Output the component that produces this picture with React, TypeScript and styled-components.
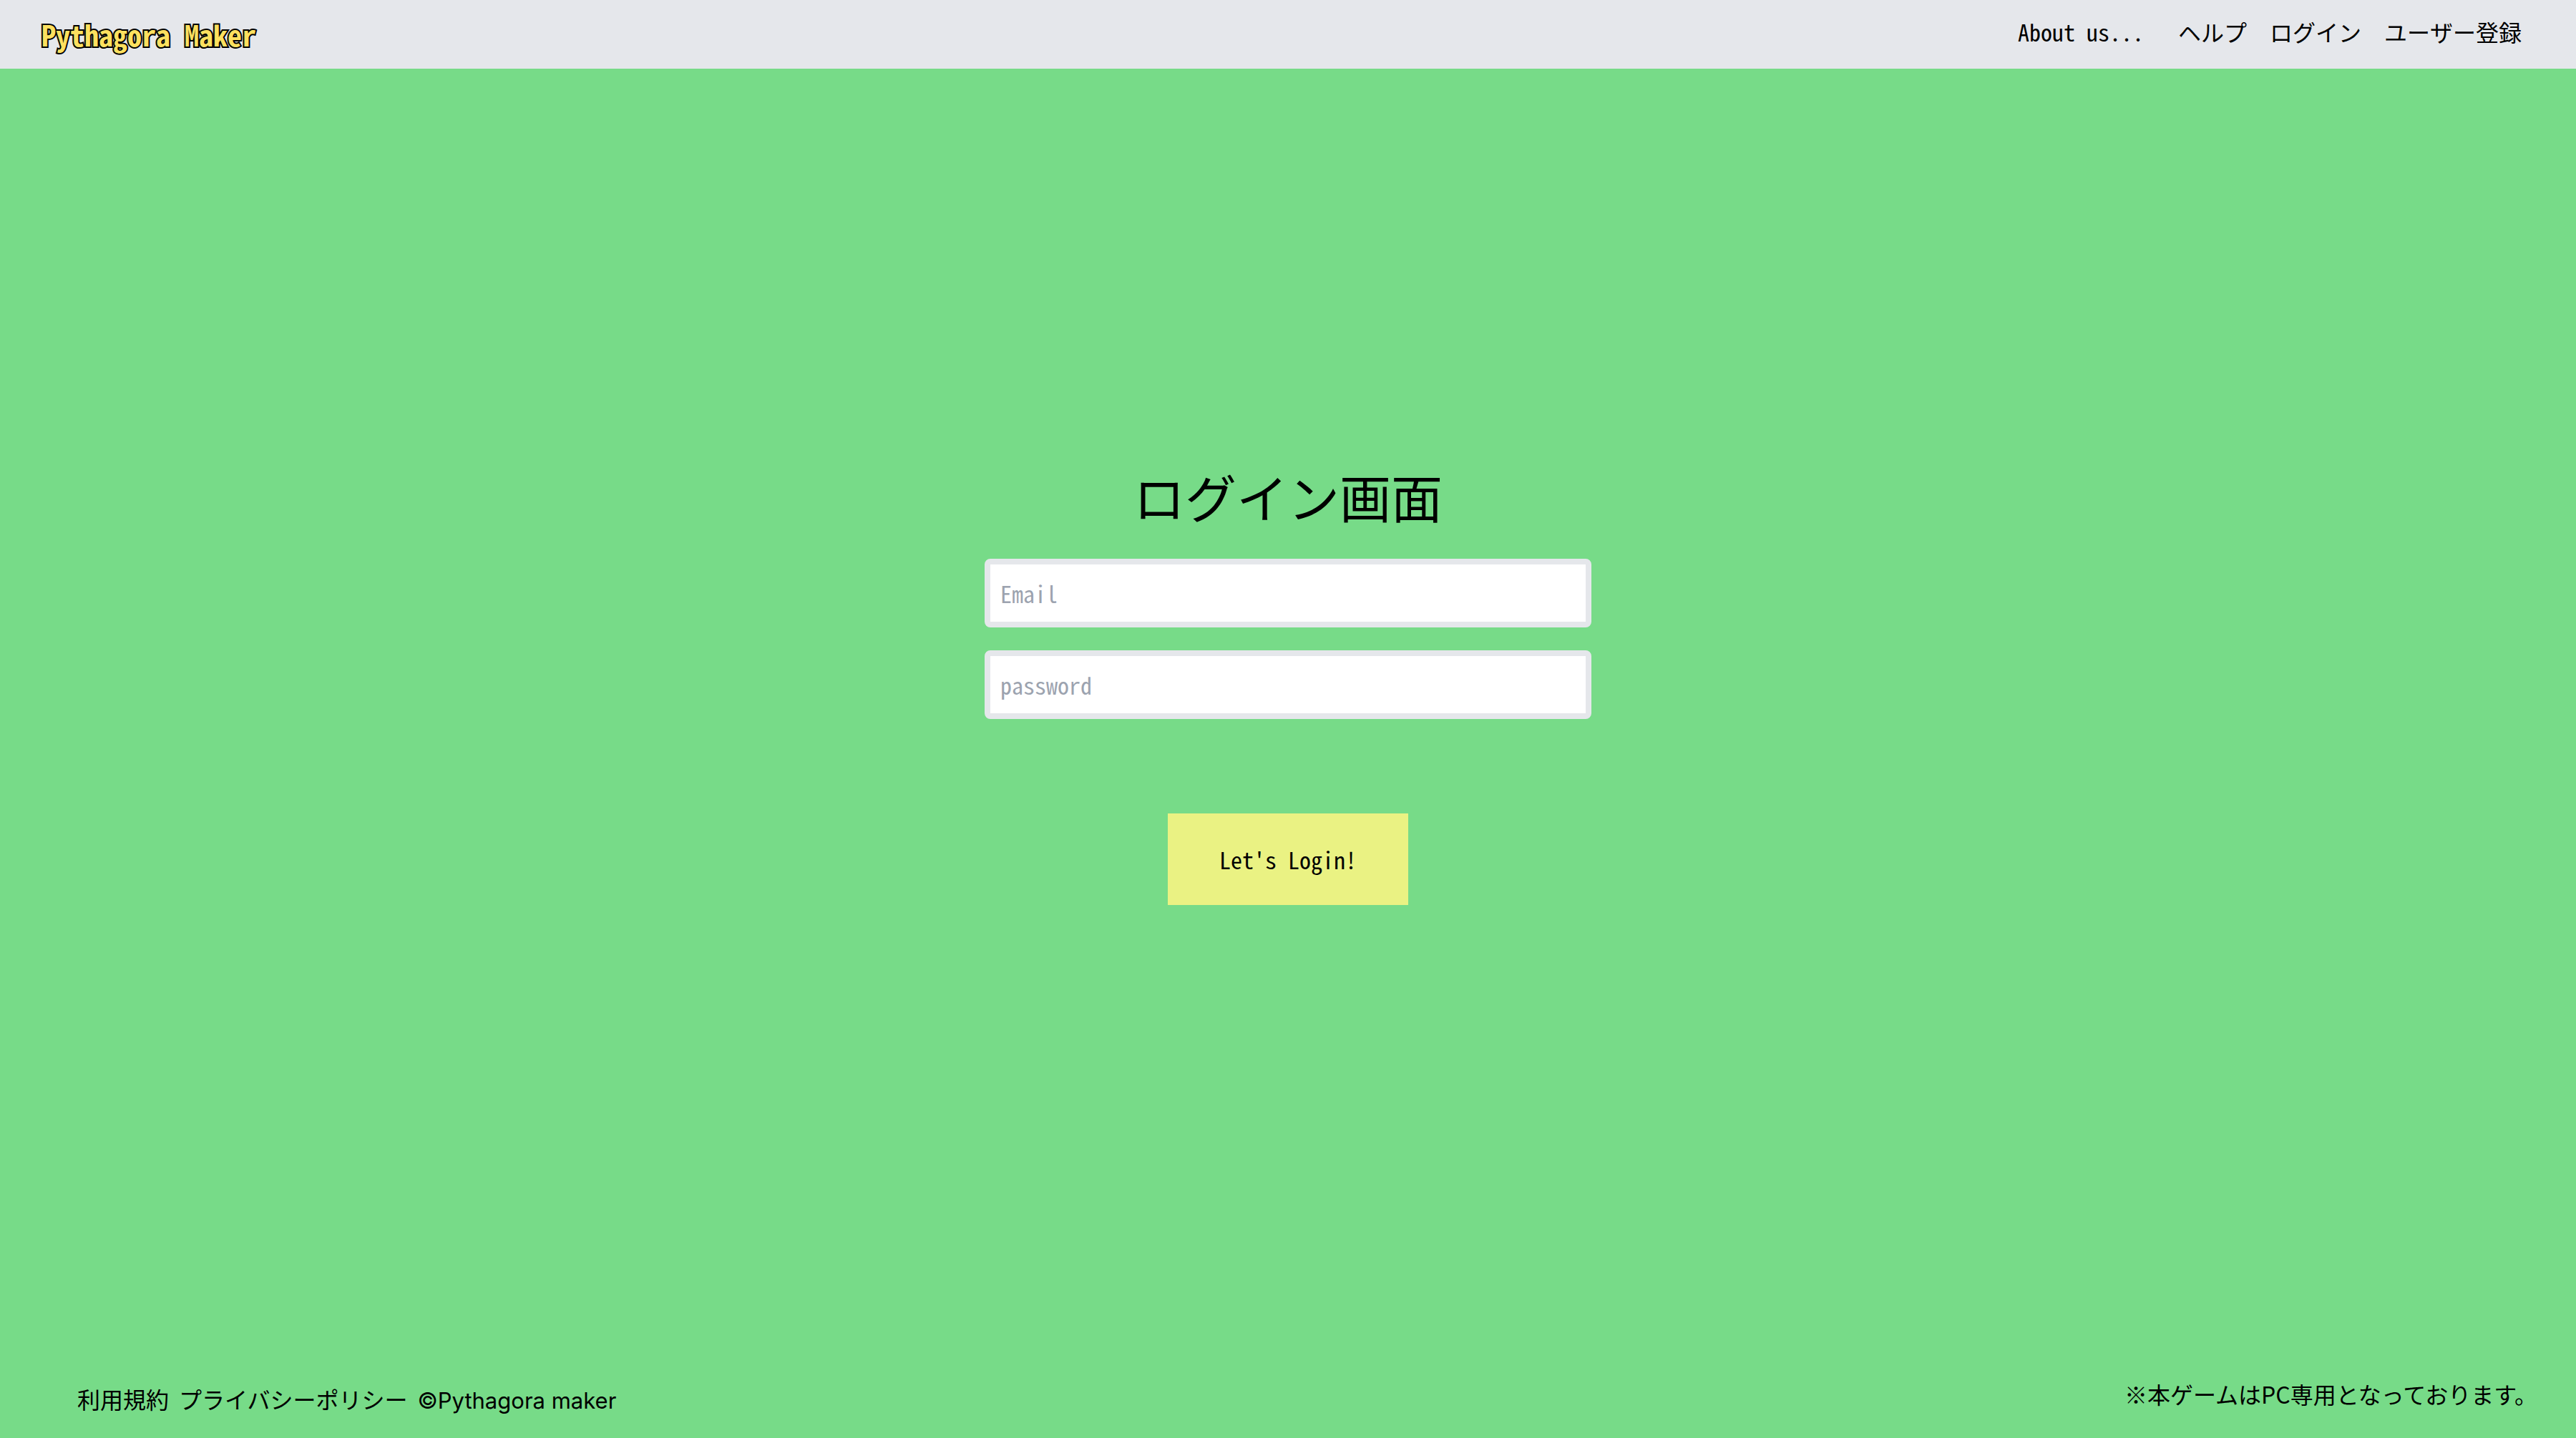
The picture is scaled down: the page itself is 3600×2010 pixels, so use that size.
import React from "react";
import styled, { createGlobalStyle } from "styled-components";

const dotFont = `"Noto Sans Mono CJK JP", "Noto Sans CJK JP", monospace`;
const textFont = `"Noto Sans CJK JP", sans-serif`;
const latinFont = `Inter, "Noto Sans CJK JP", sans-serif`;

const GlobalStyle = createGlobalStyle`
  *, *::before, *::after { box-sizing: border-box; }
  body { margin: 0; background: #77db88; color: #000; }
`;

const Page = styled.div`
  display: flex;
  flex-direction: column;
  min-height: 100vh;
  font-family: ${dotFont};
  font-size: 32px;
  line-height: 48px;
`;

const Header = styled.header`
  display: flex;
  align-items: center;
  justify-content: space-between;
  height: 96px;
  padding: 0 76px 0 58px;
  background: #e5e7eb;
`;

const Logo = styled.a`
  color: #fde05f;
  font-size: 40px;
  font-weight: 700;
  text-decoration: none;
  -webkit-text-stroke: 4px #000;
  paint-order: stroke fill;
`;

const Nav = styled.nav`
  display: flex;
  gap: 32px;
  padding-bottom: 8px;
  font-weight: 500;
`;

const NavLink = styled.a<{ $spaced?: boolean }>`
  margin-right: ${(p) => (p.$spaced ? "16px" : "0")};
  color: inherit;
  text-decoration: none;
`;

const Main = styled.main`
  display: flex;
  flex: 1;
  flex-direction: column;
  align-items: center;
  justify-content: center;
`;

const Title = styled.h1`
  margin: 0 0 52px;
  font-size: 72px;
  font-weight: 400;
  line-height: 72px;
`;

const Form = styled.form`
  display: flex;
  flex-direction: column;
  align-items: center;
  gap: 32px;
  width: 100%;
  max-width: 848px;
`;

const Field = styled.input`
  width: 100%;
  height: 96px;
  padding: 0 14px;
  border: 8px solid #e5e7eb;
  border-radius: 8px;
  background: #fff;
  color: #000;
  font: inherit;
  &::placeholder { color: #9ca3af; opacity: 1; }
`;

const Submit = styled.button`
  margin-top: 100px;
  padding: 40px 72px;
  border: 0;
  background: #eaf283;
  color: #000;
  font: inherit;
`;

const Footer = styled.footer`
  display: flex;
  align-items: flex-end;
  justify-content: space-between;
  height: 184px;
  padding: 0 54px 0 108px;
  font-family: ${textFont};
`;

const FooterLinks = styled.div`
  display: flex;
  align-items: baseline;
  gap: 14px;
  padding-bottom: 28px;
`;

const Notice = styled.p`
  margin: 0;
  padding-bottom: 38px;
`;

const FooterLink = styled.a`
  color: inherit;
  text-decoration: none;
`;

const Copyright = styled.span`
  font-family: ${latinFont};
  font-size: 31px;
`;

export default function App() {
  return (
    <Page>
      <GlobalStyle />
      <Header>
        <Logo href="#">Pythagora Maker</Logo>
        <Nav>
          <NavLink href="#about" $spaced>About us...</NavLink>
          <NavLink href="#help">ヘルプ</NavLink>
          <NavLink href="#login">ログイン</NavLink>
          <NavLink href="#signup">ユーザー登録</NavLink>
        </Nav>
      </Header>
      <Main>
        <Title>ログイン画面</Title>
        <Form onSubmit={(e) => e.preventDefault()}>
          <Field type="email" placeholder="Email" aria-label="Email" />
          <Field type="password" placeholder="password" aria-label="password" />
          <Submit type="submit">Let's Login!</Submit>
        </Form>
      </Main>
      <Footer>
        <FooterLinks>
          <FooterLink href="#terms">利用規約</FooterLink>
          <FooterLink href="#privacy">プライバシーポリシー</FooterLink>
          <Copyright>©Pythagora maker</Copyright>
        </FooterLinks>
        <Notice>※本ゲームはPC専用となっております。</Notice>
      </Footer>
    </Page>
  );
}
